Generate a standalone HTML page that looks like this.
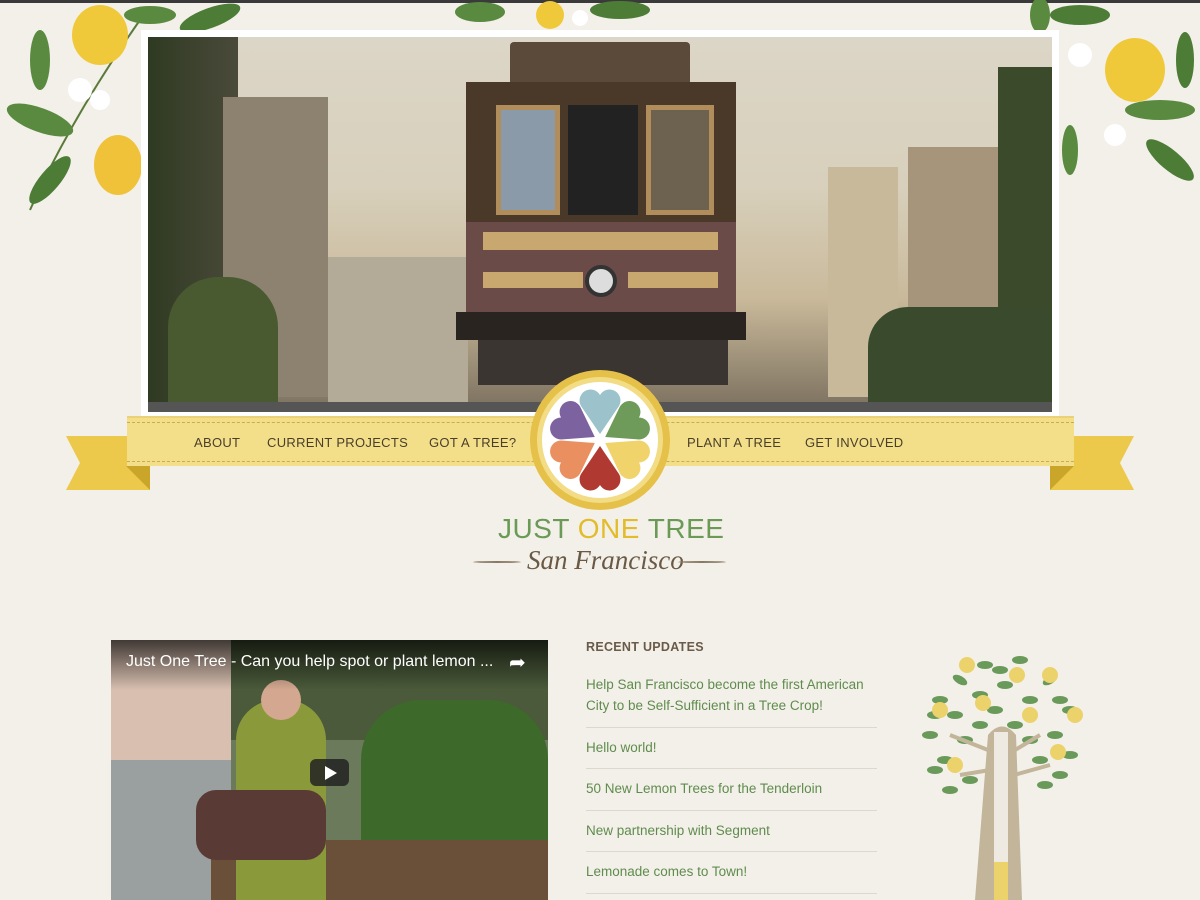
<!DOCTYPE html>
<html><head><meta charset="utf-8"><style>
*{margin:0;padding:0;box-sizing:border-box}
body{width:1200px;height:900px;overflow:hidden;background:#f3f0ea;font-family:"Liberation Sans",sans-serif;position:relative}
.topbar{position:absolute;left:0;top:0;width:1200px;height:3px;background:#3a3a3a}
.frame{position:absolute;left:141px;top:30px;width:918px;height:388px;background:#fff}
.photo{position:absolute;left:148px;top:37px;width:904px;height:375px;overflow:hidden;
background:linear-gradient(180deg,#dcd6c8 0%,#d8d0bc 40%,#c9b99a 70%,#7a6f5e 100%)}
.abs{position:absolute}
.ribbon{position:absolute;left:127px;top:416px;width:947px;height:50px;background:#f3df8a;border-top:2px solid #ead077}
.ribbon:before{content:"";position:absolute;left:0;right:0;top:4px;border-top:1px dashed #c9ad4a}
.ribbon:after{content:"";position:absolute;left:0;right:0;bottom:4px;border-top:1px dashed #c9ad4a}
.nav{position:absolute;top:435px;font-size:13px;color:#4a3f2a;letter-spacing:.3px}
.rec h3{position:absolute;left:586px;top:640px;font-size:12.5px;color:#6a5a48;letter-spacing:.3px}
.item{position:absolute;left:586px;width:291px;font-size:13.5px;color:#5f8c4c;line-height:21px;border-bottom:1px solid #ddd8cf}
</style></head><body>
<div class="topbar"></div>
<svg class="abs" style="left:0;top:0" width="250" height="220">
<path d="M30 210 Q70 120 140 20" stroke="#5a7a3a" stroke-width="2" fill="none"/>
<ellipse cx="100" cy="35" rx="28" ry="30" fill="#f0c93a"/>
<ellipse cx="118" cy="165" rx="24" ry="30" fill="#f0c23a"/>
<ellipse cx="40" cy="120" rx="35" ry="12" fill="#5a8a3f" transform="rotate(20 40 120)"/>
<ellipse cx="50" cy="180" rx="30" ry="10" fill="#4c7c36" transform="rotate(-50 50 180)"/>
<ellipse cx="40" cy="60" rx="10" ry="30" fill="#5a8a3f"/>
<ellipse cx="210" cy="18" rx="32" ry="10" fill="#4c7c36" transform="rotate(-20 210 18)"/>
<ellipse cx="150" cy="15" rx="26" ry="9" fill="#5a8a3f"/>
<circle cx="80" cy="90" r="12" fill="#fff"/><circle cx="100" cy="100" r="10" fill="#fff"/>
</svg>
<svg class="abs" style="left:440px;top:0" width="220" height="30">
<ellipse cx="40" cy="12" rx="25" ry="10" fill="#5a8a3f"/><circle cx="110" cy="15" r="14" fill="#f0c93a"/>
<ellipse cx="180" cy="10" rx="30" ry="9" fill="#4c7c36"/><circle cx="140" cy="18" r="8" fill="#fff"/></svg>
<svg class="abs" style="left:1010px;top:0" width="190" height="200">
<ellipse cx="125" cy="70" rx="30" ry="32" fill="#f0c93a"/>
<ellipse cx="160" cy="160" rx="30" ry="10" fill="#4c7c36" transform="rotate(40 160 160)"/>
<ellipse cx="150" cy="110" rx="35" ry="10" fill="#5a8a3f"/>
<ellipse cx="70" cy="15" rx="30" ry="10" fill="#4c7c36"/><ellipse cx="30" cy="15" rx="10" ry="18" fill="#5a8a3f"/>
<ellipse cx="175" cy="60" rx="9" ry="28" fill="#4c7c36"/>
<circle cx="70" cy="55" r="12" fill="#fff"/><circle cx="105" cy="135" r="11" fill="#fff"/>
<ellipse cx="60" cy="150" rx="8" ry="25" fill="#5a8a3f"/></svg>

<div class="frame"></div>
<div class="photo">
 <div class="abs" style="left:0;top:0;width:90px;height:375px;background:linear-gradient(90deg,#2f3a22,#4a4a3a)"></div>
 <div class="abs" style="left:75px;top:60px;width:105px;height:300px;background:#8d8270"></div>
 <div class="abs" style="left:180px;top:220px;width:140px;height:150px;background:#b3aa98"></div>
 <div class="abs" style="left:680px;top:130px;width:70px;height:230px;background:#c7b999"></div>
 <div class="abs" style="left:760px;top:110px;width:120px;height:250px;background:#a6957b"></div>
 <div class="abs" style="left:850px;top:30px;width:54px;height:345px;background:#3b4a2a"></div>
 <div class="abs" style="left:720px;top:270px;width:184px;height:105px;background:#3a4a2c;border-radius:40px 0 0 0"></div>
 <div class="abs" style="left:20px;top:240px;width:110px;height:135px;background:#4a5a30;border-radius:50px 50px 0 0"></div>
 <div class="abs" style="left:362px;top:5px;width:180px;height:40px;background:#5b4a3a;border-radius:4px 4px 0 0"></div>
 <div class="abs" style="left:318px;top:45px;width:270px;height:140px;background:#4a3828"></div>
 <div class="abs" style="left:348px;top:68px;width:64px;height:110px;background:#8a9aa8;border:5px solid #b08d5a"></div>
 <div class="abs" style="left:420px;top:68px;width:70px;height:110px;background:#222"></div>
 <div class="abs" style="left:498px;top:68px;width:68px;height:110px;background:#6d6250;border:5px solid #b08d5a"></div>
 <div class="abs" style="left:318px;top:185px;width:270px;height:90px;background:#6b4b48"></div>
 <div class="abs" style="left:335px;top:195px;width:235px;height:18px;background:#c9a870"></div>
 <div class="abs" style="left:335px;top:235px;width:100px;height:16px;background:#c9a870"></div>
 <div class="abs" style="left:480px;top:235px;width:90px;height:16px;background:#c9a870"></div>
 <div class="abs" style="left:437px;top:228px;width:32px;height:32px;border-radius:50%;background:#ddd;border:4px solid #333"></div>
 <div class="abs" style="left:308px;top:275px;width:290px;height:28px;background:#2a2420"></div>
 <div class="abs" style="left:330px;top:303px;width:250px;height:45px;background:#3a3530"></div>
 <div class="abs" style="left:0;top:365px;width:904px;height:10px;background:#555"></div>
</div>

<svg class="abs" style="left:66px;top:436px" width="84" height="56"><polygon points="0,0 84,0 84,54 0,54 14,27" fill="#ecc94a"/><polygon points="60,30 84,30 84,54" fill="#c9a52a"/></svg>
<svg class="abs" style="left:1050px;top:436px" width="84" height="56"><polygon points="0,0 84,0 70,27 84,54 0,54" fill="#ecc94a"/><polygon points="0,30 24,30 0,54" fill="#c9a52a"/></svg>
<div class="ribbon"></div>
<div class="nav" style="left:194px">ABOUT</div>
<div class="nav" style="left:267px">CURRENT PROJECTS</div>
<div class="nav" style="left:429px">GOT A TREE?</div>
<div class="nav" style="left:687px">PLANT A TREE</div>
<div class="nav" style="left:805px">GET INVOLVED</div>

<svg class="abs" style="left:528px;top:368px" width="144" height="144" viewBox="0 0 144 144">
<defs><path id="ht" d="M72 66 L53 38 A10 10 0 0 1 72 27 A10 10 0 0 1 91 38 Z"/></defs>
<circle cx="72" cy="72" r="70" fill="#e6c14a"/><circle cx="72" cy="72" r="63" fill="#f3dc86"/>
<circle cx="72" cy="72" r="58" fill="#fff"/>
<use href="#ht" fill="#9cc3cb"/>
<use href="#ht" fill="#6e9a5a" transform="rotate(60 72 72)"/>
<use href="#ht" fill="#f0d36a" transform="rotate(120 72 72)"/>
<use href="#ht" fill="#b03a32" transform="rotate(180 72 72)"/>
<use href="#ht" fill="#ea9060" transform="rotate(240 72 72)"/>
<use href="#ht" fill="#7d62a0" transform="rotate(300 72 72)"/>
</svg>
<div class="abs" style="left:498px;top:513px;font-size:28px;color:#6a9a55;letter-spacing:.5px">JUST <span style="color:#e2bc2a">ONE</span> TREE</div>
<div class="abs" style="left:527px;top:545px;font-family:'Liberation Serif',serif;font-style:italic;font-size:27px;color:#6a5a45">San Francisco</div>
<div class="abs" style="left:473px;top:561px;width:48px;border-top:2px solid #8a7a65;border-radius:50%"></div>
<div class="abs" style="left:678px;top:561px;width:48px;border-top:2px solid #8a7a65;border-radius:50%"></div>

<div class="abs" style="left:111px;top:640px;width:437px;height:260px;overflow:hidden;background:#6a7a5a">
 <div class="abs" style="left:0;top:0;width:120px;height:260px;background:#d8bfb0"></div>
 <div class="abs" style="left:0;top:120px;width:120px;height:140px;background:#9aa0a0"></div>
 <div class="abs" style="left:120px;top:0;width:317px;height:100px;background:#4a5a3a"></div>
 <div class="abs" style="left:250px;top:60px;width:187px;height:140px;background:#3d6a2a;border-radius:60px 60px 0 0"></div>
 <div class="abs" style="left:100px;top:200px;width:337px;height:60px;background:#6a5038"></div>
 <div class="abs" style="left:125px;top:60px;width:90px;height:200px;background:#8a9a3a;border-radius:40px 40px 0 0"></div>
 <div class="abs" style="left:150px;top:40px;width:40px;height:40px;border-radius:50%;background:#d4a890"></div>
 <div class="abs" style="left:85px;top:150px;width:130px;height:70px;background:#5a3a34;border-radius:20px"></div>
 <div class="abs" style="left:0;top:0;width:437px;height:50px;background:linear-gradient(180deg,rgba(0,0,0,.7),rgba(0,0,0,0))"></div>
 <div class="abs" style="left:15px;top:13px;color:#fff;font-size:16px">Just One Tree - Can you help spot or plant lemon ...</div>
 <div class="abs" style="left:398px;top:10px;color:#fff;font-size:20px">➦</div>
 <div class="abs" style="left:199px;top:119px;width:39px;height:27px;background:#222;border-radius:6px;opacity:.85"></div>
 <div class="abs" style="left:214px;top:126px;width:0;height:0;border-left:12px solid #fff;border-top:7px solid transparent;border-bottom:7px solid transparent"></div>
</div>

<div class="rec"><h3>RECENT UPDATES</h3></div>
<div class="item" style="top:674px;height:54px">Help San Francisco become the first American City to be Self-Sufficient in a Tree Crop!</div>
<div class="item" style="top:737px;height:32px">Hello world!</div>
<div class="item" style="top:778px;height:33px">50 New Lemon Trees for the Tenderloin</div>
<div class="item" style="top:820px;height:32px">New partnership with Segment</div>
<div class="item" style="top:861px;height:33px">Lemonade comes to Town!</div>

<svg class="abs" style="left:910px;top:640px" width="185" height="260">
<g fill="#6a9a5a">
<ellipse cx="30" cy="60" rx="8" ry="4"/><ellipse cx="50" cy="40" rx="8" ry="4" transform="rotate(30 50 40)"/>
<ellipse cx="75" cy="25" rx="8" ry="4"/><ellipse cx="110" cy="20" rx="8" ry="4"/><ellipse cx="140" cy="40" rx="8" ry="4" transform="rotate(-30 140 40)"/>
<ellipse cx="160" cy="70" rx="8" ry="4"/><ellipse cx="20" cy="95" rx="8" ry="4"/><ellipse cx="45" cy="75" rx="8" ry="4"/>
<ellipse cx="70" cy="55" rx="8" ry="4"/><ellipse cx="95" cy="45" rx="8" ry="4"/><ellipse cx="120" cy="60" rx="8" ry="4"/>
<ellipse cx="145" cy="95" rx="8" ry="4"/><ellipse cx="160" cy="115" rx="8" ry="4"/><ellipse cx="35" cy="120" rx="8" ry="4"/>
<ellipse cx="55" cy="100" rx="8" ry="4"/><ellipse cx="130" cy="120" rx="8" ry="4"/><ellipse cx="60" cy="140" rx="8" ry="4"/>
<ellipse cx="135" cy="145" rx="8" ry="4"/><ellipse cx="85" cy="70" rx="8" ry="4"/><ellipse cx="105" cy="85" rx="8" ry="4"/>
<ellipse cx="40" cy="150" rx="8" ry="4"/><ellipse cx="150" cy="135" rx="8" ry="4"/><ellipse cx="25" cy="75" rx="8" ry="4"/>
<ellipse cx="70" cy="85" rx="8" ry="4"/><ellipse cx="120" cy="100" rx="8" ry="4"/><ellipse cx="90" cy="30" rx="8" ry="4"/>
<ellipse cx="25" cy="130" rx="8" ry="4"/><ellipse cx="150" cy="60" rx="8" ry="4"/>
</g>
<g fill="#ecd26a"><circle cx="57" cy="25" r="8"/><circle cx="107" cy="35" r="8"/><circle cx="140" cy="35" r="8"/>
<circle cx="30" cy="70" r="8"/><circle cx="73" cy="63" r="8"/><circle cx="120" cy="75" r="8"/><circle cx="165" cy="75" r="8"/>
<circle cx="148" cy="112" r="8"/><circle cx="45" cy="125" r="8"/></g>
<path d="M78 110 L40 95 M80 130 L50 135 M105 110 L130 95 M104 135 L140 125" stroke="#c2b59a" stroke-width="4"/>
<path d="M65 260 L78 95 Q92 78 106 95 L112 260 Z" fill="#c2b59a"/>
<rect x="84" y="92" width="14" height="168" fill="#eeeae2"/>
<rect x="84" y="222" width="14" height="38" fill="#ecd26a"/>
</svg>
</body></html>
